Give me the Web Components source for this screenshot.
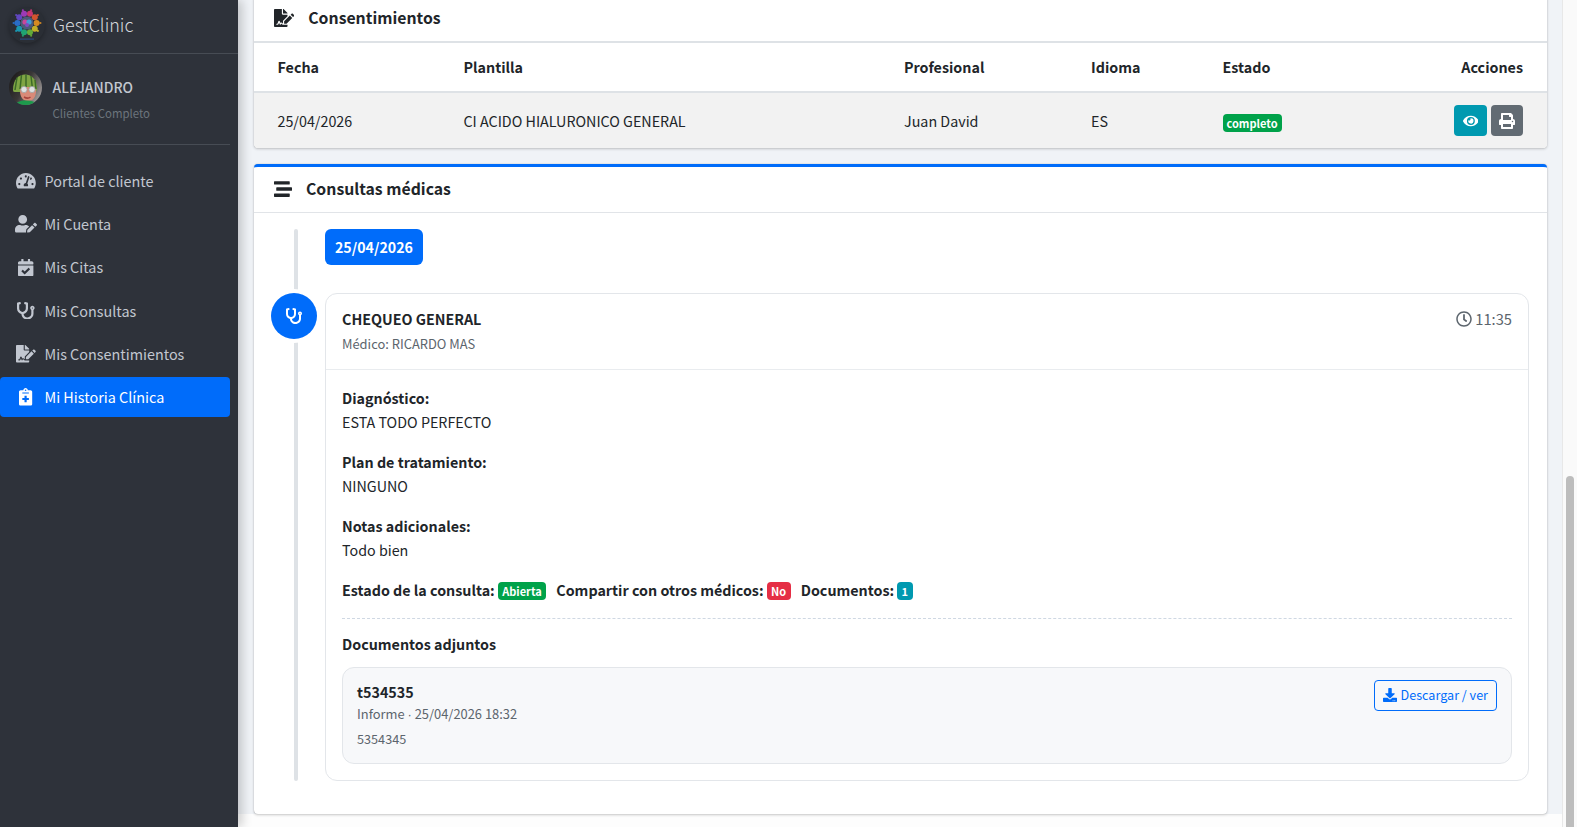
<!DOCTYPE html>
<html lang="es">
<head>
<meta charset="utf-8">
<title>GestClinic</title>
<style>
html,body{margin:0;height:827px;overflow:hidden;}
body{font-family:"Noto Sans CJK SC","Liberation Sans",sans-serif;font-size:14.3px;color:#212529;}
</style>
</head>
<body>
<gc-shell>
	<gc-sidebar slot="side">
		<gc-nav-item icon="gauge" vb="576">Portal de cliente</gc-nav-item>
		<gc-nav-item icon="useredit" vb="640">Mi Cuenta</gc-nav-item>
		<gc-nav-item icon="calendar" vb="448">Mis Citas</gc-nav-item>
		<gc-nav-item icon="stetho" vb="512">Mis Consultas</gc-nav-item>
		<gc-nav-item icon="signature" vb="576">Mis Consentimientos</gc-nav-item>
		<gc-nav-item icon="medical" vb="384" active>Mi Historia Clínica</gc-nav-item>
	</gc-sidebar>

	<gc-card class="consent" icon="signature" vb="576">
		<span slot="title">Consentimientos</span>
		<gc-consent-table></gc-consent-table>
	</gc-card>

	<gc-card class="visits" icon="stream" vb="512" accent>
		<span slot="title">Consultas médicas</span>
		<gc-timeline date="25/04/2026">
			<gc-visit title="CHEQUEO GENERAL" doctor="Médico: RICARDO MAS" time="11:35">
				<gc-field label="Diagnóstico:">ESTA TODO PERFECTO</gc-field>
				<gc-field label="Plan de tratamiento:">NINGUNO</gc-field>
				<gc-field label="Notas adicionales:">Todo bien</gc-field>
				<gc-status></gc-status>
				<gc-doc name="t534535" meta="Informe · 25/04/2026 18:32" note="5354345"></gc-doc>
			</gc-visit>
		</gc-timeline>
	</gc-card>
</gc-shell>

<script>
const ICONS = {
	gauge:'M288 32C128.94 32 0 160.94 0 320c0 52.8 14.25 102.26 39.06 144.8 5.61 9.62 16.3 15.2 27.44 15.2h443c11.14 0 21.83-5.58 27.44-15.2C561.75 422.26 576 372.8 576 320c0-159.06-128.94-288-288-288zm0 64c14.71 0 26.58 10.13 30.32 23.65-1.11 2.26-2.64 4.23-3.45 6.67l-9.22 27.67c-5.13 3.49-10.97 6.01-17.64 6.01-17.67 0-32-14.33-32-32S270.33 96 288 96zM96 384c-17.67 0-32-14.33-32-32s14.33-32 32-32 32 14.33 32 32-14.33 32-32 32zm48-160c-17.67 0-32-14.33-32-32s14.33-32 32-32 32 14.33 32 32-14.33 32-32 32zm246.77-72.41l-61.33 184C343.13 347.33 352 364.54 352 384c0 11.72-3.38 22.55-8.88 32H232.88c-5.5-9.45-8.88-20.28-8.88-32 0-33.94 26.5-61.43 59.9-63.59l61.34-184.01c4.17-12.56 17.73-19.45 30.36-15.17 12.57 4.19 19.35 17.79 15.17 30.36zm14.66 57.2l15.52-46.55c3.47-1.29 7.13-2.23 11.05-2.23 17.67 0 32 14.33 32 32s-14.33 32-32 32c-11.38-.01-20.89-6.28-26.57-15.22zM480 384c-17.67 0-32-14.33-32-32s14.33-32 32-32 32 14.33 32 32-14.33 32-32 32z',
	useredit:'M224 256c70.7 0 128-57.3 128-128S294.7 0 224 0 96 57.3 96 128s57.3 128 128 128zm89.6 32h-16.7c-22.2 10.2-46.9 16-72.9 16s-50.6-5.8-72.9-16h-16.7C60.2 288 0 348.2 0 422.4V464c0 26.5 21.5 48 48 48h274.9c-2.4-6.8-3.4-14-2.6-21.3l6.8-60.9 1.2-11.1 7.9-7.9 77.3-77.3c-24.5-27.7-60-45.5-99.9-45.5zm45.3 145.3l-6.8 61c-1.1 10.2 7.5 18.8 17.6 17.6l60.9-6.8 137.9-137.9-71.7-71.7-137.9 137.8zM633 268.9L595.1 231c-9.3-9.3-24.5-9.3-33.8 0l-37.8 37.8-4.1 4.1 71.8 71.7 41.8-41.8c9.3-9.4 9.3-24.5 0-33.9z',
	calendar:'M436 160H12c-6.627 0-12-5.373-12-12v-36c0-26.51 21.49-48 48-48h48V12c0-6.627 5.373-12 12-12h40c6.627 0 12 5.373 12 12v52h128V12c0-6.627 5.373-12 12-12h40c6.627 0 12 5.373 12 12v52h48c26.51 0 48 21.49 48 48v36c0 6.627-5.373 12-12 12zM12 192h424c6.627 0 12 5.373 12 12v260c0 26.51-21.49 48-48 48H48c-26.51 0-48-21.49-48-48V204c0-6.627 5.373-12 12-12zm333.296 95.947l-28.169-28.398c-4.667-4.705-12.265-4.736-16.97-.068L194.12 364.665l-45.98-46.352c-4.667-4.705-12.266-4.736-16.971-.068l-28.397 28.17c-4.705 4.667-4.736 12.265-.068 16.97l82.601 83.269c4.667 4.705 12.265 4.736 16.97.068l142.953-141.805c4.705-4.667 4.736-12.265.068-16.97z',
	stetho:'M447.1 112c-34.2.5-62.3 28.4-63 62.6-.5 24.3 12.5 45.6 32 56.8V344c0 57.3-50.2 104-112 104-60 0-109.2-44.1-111.9-99.2C265 333.8 320 269.2 320 192V36.6c0-11.4-8.1-21.3-19.3-23.5L237.8.5c-13-2.6-25.6 5.8-28.2 18.8L206.4 35c-2.6 13 5.8 25.6 18.8 28.2l30.7 6.1v121.4c0 52.9-42.2 96.7-95.1 97.2-53.4.5-96.9-42.7-96.9-96V69.4l30.7-6.1c13-2.6 21.4-15.2 18.8-28.2l-3.1-15.7C107.7 6.4 95.1-2 82.1.6L19.3 13C8.1 15.3 0 25.1 0 36.6V192c0 77.3 55.1 142 128.1 156.8C130.7 439.2 208.6 512 304 512c97 0 176-75.4 176-168V231.4c19.1-11.1 32-31.7 32-55.4 0-35.7-29.2-64.5-64.9-64zm.9 80c-8.8 0-16-7.2-16-16s7.2-16 16-16 16 7.2 16 16-7.2 16-16 16z',
	signature:'M218.17 424.14c-2.95-5.92-8.09-6.52-10.17-6.52s-7.22.59-10.02 6.19l-7.67 15.34c-6.37 12.78-25.03 11.37-29.48-2.09L144 386.59l-10.61 31.88c-5.89 17.66-22.38 29.53-41 29.53H80c-8.84 0-16-7.16-16-16s7.16-16 16-16h12.39c4.83 0 9.11-3.08 10.64-7.66l18.19-54.64c3.3-9.81 12.44-16.41 22.78-16.41s19.48 6.59 22.77 16.41l13.88 41.64c19.75-16.19 54.06-9.7 66 14.16 1.89 3.78 5.49 5.95 9.36 6.26v-82.12l128-127.09V160H248c-13.2 0-24-10.8-24-24V0H24C10.7 0 0 10.7 0 24v464c0 13.3 10.7 24 24 24h336c13.3 0 24-10.7 24-24v-40l-128-.11c-16.12-.31-30.58-9.28-37.83-23.75zM384 121.9c0-6.3-2.5-12.4-7-16.9L279.1 7c-4.5-4.5-10.6-7-17-7H256v128h128v-6.1zm-96 225.06V416h68.99l161.68-162.78-67.88-67.88L288 346.96zm280.54-179.63l-31.87-31.87c-9.94-9.94-26.07-9.94-36.01 0l-27.25 27.25 67.88 67.88 27.25-27.25c9.95-9.94 9.95-26.07 0-36.01z',
	medical:'M336 64h-80c0-35.3-28.7-64-64-64s-64 28.7-64 64H48C21.5 64 0 85.5 0 112v352c0 26.5 21.5 48 48 48h288c26.5 0 48-21.5 48-48V112c0-26.5-21.5-48-48-48zM192 40c13.3 0 24 10.7 24 24s-10.7 24-24 24-24-10.7-24-24 10.7-24 24-24zm96 304c0 4.4-3.6 8-8 8h-56v56c0 4.4-3.6 8-8 8h-48c-4.4 0-8-3.6-8-8v-56h-56c-4.4 0-8-3.6-8-8v-48c0-4.4 3.6-8 8-8h56v-56c0-4.4 3.6-8 8-8h48c4.4 0 8 3.6 8 8v56h56c4.4 0 8 3.6 8 8v48zm0-192c0 4.4-3.6 8-8 8H104c-4.4 0-8-3.6-8-8v-16c0-4.4 3.6-8 8-8h176c4.4 0 8 3.6 8 8v16z',
	stream:'M16 128h416c8.84 0 16-7.16 16-16V48c0-8.84-7.16-16-16-16H16C7.16 32 0 39.16 0 48v64c0 8.84 7.16 16 16 16zm480 80H80c-8.84 0-16 7.16-16 16v64c0 8.84 7.16 16 16 16h416c8.84 0 16-7.16 16-16v-64c0-8.84-7.16-16-16-16zm-64 176H16c-8.84 0-16 7.16-16 16v64c0 8.84 7.16 16 16 16h416c8.84 0 16-7.16 16-16v-64c0-8.84-7.16-16-16-16z',
	eye:'M572.52 241.4C518.29 135.59 410.93 64 288 64S57.68 135.64 3.48 241.41a32.35 32.35 0 0 0 0 29.19C57.71 376.41 165.07 448 288 448s230.32-71.64 284.52-177.41a32.35 32.35 0 0 0 0-29.19zM288 400a144 144 0 1 1 144-144 143.93 143.93 0 0 1-144 144zm0-240a95.31 95.31 0 0 0-25.31 3.79 47.85 47.85 0 0 1-66.9 66.9A95.78 95.78 0 1 0 288 160z',
	print:'M448 192V77.25c0-8.49-3.37-16.62-9.37-22.63L393.37 9.37c-6-6-14.14-9.37-22.63-9.37H96C78.33 0 64 14.33 64 32v160c-35.35 0-64 28.65-64 64v112c0 8.84 7.16 16 16 16h48v96c0 17.67 14.33 32 32 32h320c17.67 0 32-14.33 32-32v-96h48c8.84 0 16-7.16 16-16V256c0-35.35-28.65-64-64-64zm-64 256H128v-96h256v96zm0-224H128V64h192v48c0 8.84 7.16 16 16 16h48v96zm48 72c-13.25 0-24-10.75-24-24 0-13.26 10.75-24 24-24s24 10.74 24 24c0 13.25-10.75 24-24 24z',
	download:'M216 0h80c13.3 0 24 10.7 24 24v168h87.7c17.8 0 26.7 21.5 14.1 34.1L269.7 378.3c-7.5 7.5-19.8 7.5-27.3 0L90.1 226.1c-12.6-12.6-3.7-34.1 14.1-34.1H192V24c0-13.3 10.7-24 24-24zm296 376v112c0 13.3-10.7 24-24 24H24c-13.3 0-24-10.7-24-24V376c0-13.3 10.7-24 24-24h146.7l49 49c20.1 20.1 52.5 20.1 72.6 0l49-49H488c13.3 0 24 10.7 24 24zm-124 88c0-11-9-20-20-20s-20 9-20 20 9 20 20 20 20-9 20-20zm64 0c0-11-9-20-20-20s-20 9-20 20 9 20 20 20 20-9 20-20z',
	clock:'M256 8C119 8 8 119 8 256s111 248 248 248 248-111 248-248S393 8 256 8zm0 448c-110.5 0-200-89.5-200-200S145.5 56 256 56s200 89.5 200 200-89.5 200-200 200zm61.8-104.4l-84.9-61.7c-3.1-2.3-4.9-5.9-4.9-9.7V116c0-6.6 5.4-12 12-12h32c6.6 0 12 5.4 12 12v141.7l66.8 48.6c5.4 3.9 6.5 11.4 2.6 16.8L334.6 349c-3.9 5.3-11.4 6.5-16.8 2.6z'
}

function svgIcon(name,vb,h){
	const w = h*vb/512
	return `<svg xmlns="http://www.w3.org/2000/svg" width="${w}" height="${h}" viewBox="0 0 ${vb} 512" fill="currentColor" style="display:block;flex:none"><path d="${ICONS[name]}"/></svg>`
}

// small helper so each element only has to give its shadow html
function shadow(el,html){
	el.attachShadow({mode:'open'})
	el.shadowRoot.innerHTML = html
}

class GcShell extends HTMLElement{
	connectedCallback(){
		shadow(this,`<style>
		:host{display:flex;width:1577px;height:827px;background:#f0f3f7;overflow:hidden;}
		.main{flex:1;min-width:0;display:flex;flex-direction:column;gap:16px;padding:0 15px 0 16px;overflow:hidden;position:relative;}
		.foot{flex:1;background:#fdfdfd;margin:-16px -15px 0 -16px;}
		.bar{flex:none;width:15px;box-sizing:border-box;background:#fafafa;border-left:1px solid #e8e8e8;display:flex;flex-direction:column;justify-content:flex-end;padding-left:3px;}
		.thumb{width:8px;height:351px;background:#bdbdbd;border-radius:4px 4px 0 0;}
		</style>
		<slot name="side"></slot>
		<div class="main"><slot></slot><div class="foot"></div></div>
		<div class="bar"><div class="thumb"></div></div>`)
	}
}

class GcSidebar extends HTMLElement{
	connectedCallback(){
		// logo: gear ring in rainbow segments
		const colors = ['#e0367c','#ee5a2e','#f29a1f','#dcc626','#6cc13a','#1fb87c','#16a8c4','#2a78e0','#6a4bd8','#b03ccc']
		let ring = ''
		for(let i=0;i<10;i++){
			const a = (i+.5)/10*Math.PI*2
			const x = 18+Math.sin(a)*9.6, y = 16-Math.cos(a)*9.6
			const ox = 18+Math.sin(a)*13.4, oy = 16-Math.cos(a)*13.4
			ring += `<circle cx="${x}" cy="${y}" r="3" fill="${colors[i]}" opacity=".85"/><circle cx="${ox}" cy="${oy}" r="1.1" fill="${colors[i]}" opacity=".8"/>`
		}
		shadow(this,`<style>
		:host{display:block;flex:none;width:238px;height:827px;background:#2e323a;color:#c2c7d0;box-shadow:4px 0 10px rgba(0,0,0,.2);position:relative;z-index:2;}
		.brand{height:54px;box-sizing:border-box;border-bottom:1px solid #474c54;display:flex;align-items:center;padding:0 0 6px 9px;gap:8px;font-size:17.9px;font-weight:300;color:#d5d8dd;}
		.logo{width:36px;height:36px;border-radius:50%;background:#2a2e35;box-shadow:0 2px 5px rgba(0,0,0,.3);display:block;flex:none;margin-top:2px;}
		.user{margin-right:8px;height:91px;box-sizing:border-box;border-bottom:1px solid #474c54;display:flex;padding:16px 0 0 9px;gap:10.5px;}
		.avatar{width:33px;height:35px;flex:none;display:block;}
		.name{font-size:13.9px;line-height:24px;font-weight:500;color:#c2c7d0;margin-top:5px;}
		.role{font-size:11.4px;line-height:20px;color:#6c757d;margin-top:4px;}
		nav{display:flex;flex-direction:column;margin:16px 8px 0 0;}
		</style>
		<div class="brand">
			<svg class="logo" viewBox="0 0 36 36">
				${ring}
				<circle cx="18" cy="16" r="6.6" fill="#4b5a78"/>
				<circle cx="16" cy="15" r="2.6" fill="#c9479a"/>
				<circle cx="20" cy="15" r="2.6" fill="#3f9bd8"/>
				<circle cx="18" cy="18" r="2" fill="#7b4cc0"/>
				<rect x="11" y="31.5" width="14" height="1.2" fill="#2c4a7d"/>
			</svg>
			<span>GestClinic</span>
		</div>
		<div class="user">
			<svg class="avatar" viewBox="0 0 33 35">
				<defs>
					<clipPath id="c"><ellipse cx="16.5" cy="17.5" rx="16.5" ry="17.5"/></clipPath>
					<linearGradient id="g" x1="0" y1="0" x2="1" y2=".6"><stop offset="0" stop-color="#151414"/><stop offset=".55" stop-color="#3a3737"/><stop offset="1" stop-color="#9a9594"/></linearGradient>
				</defs>
				<g clip-path="url(#c)">
					<rect width="33" height="35" fill="url(#g)"/>
					<path d="M4 20C4 9 10 4.500 16 4.500S28 9 28 19c0 2-1 3-3 3H7c-2 0-3 0-3-2z" fill="#7fa544"/>
					<path d="M8 7.500L6 20M12.500 5L11 19M17 4.500V18M22 6l1.500 13M26 10l1 9" stroke="#3c6a28" stroke-width="1.5" fill="none"/>
					<path d="M11 21c0-3 2-4 7-4s9 1 9 4c0 6-3 10-8 10s-8-4-8-10z" fill="#d98a78"/>
					<circle cx="15" cy="19.500" r="3.100" fill="#dfe2e2" stroke="#9ea1a1" stroke-width=".8"/>
					<circle cx="23" cy="19.500" r="3.100" fill="#dfe2e2" stroke="#9ea1a1" stroke-width=".8"/>
					<path d="M15 27c2 1.200 5 1.200 6.500 0" stroke="#a8443d" stroke-width="1.500" fill="none"/>
					<path d="M6 35c1-3 5-4.500 11-4.500S28 32 29 35z" fill="#1d9a4c"/>
				</g>
			</svg>
			<div><div class="name">ALEJANDRO</div><div class="role">Clientes Completo</div></div>
		</div>
		<nav><slot></slot></nav>`)
	}
}

class GcNavItem extends HTMLElement{
	connectedCallback(){
		const vb = +this.getAttribute('vb')
		shadow(this,`<style>
		:host{display:block;height:40px;margin-bottom:3.2px;border-radius:4px;line-height:40px;font-size:14.4px;color:#c2c7d0;}
		:host([active]){background:#006cfa;color:#fff;}
		.row{display:flex;align-items:center;height:100%;}
		.ico{width:36px;margin:0 .5px 0 8px;flex:none;display:flex;justify-content:center;}
		</style>
		<div class="row"><span class="ico">${svgIcon(this.getAttribute('icon'),vb,17.6)}</span><span><slot></slot></span></div>`)
	}
}

class GcCard extends HTMLElement{
	connectedCallback(){
		const accent = this.hasAttribute('accent')
		const vb = +this.getAttribute('vb')
		shadow(this,`<style>
		:host{display:block;flex:none;position:relative;background:#fff;border-radius:4px;box-shadow:0 0 1px rgba(0,0,0,.25),0 1px 3px rgba(0,0,0,.2);}
		:host(.consent){margin-top:-6px;}
		:host([accent]){border-top:3px solid #006cfa;}
		header{display:flex;align-items:center;box-sizing:border-box;height:${accent?46:47}px;padding:${accent?'0 0 2px 19.5px':'0 0 0 20px'};border-bottom:${accent?'1px solid #e1e4e8':'0'};font-size:15.8px;font-weight:700;color:#212529;gap:${accent?14.5:14}px;}
		</style>
		<header>${svgIcon(this.getAttribute('icon'),vb,18)}<slot name="title"></slot></header>
		<slot></slot>`)
	}
}

class GcBadge extends HTMLElement{
	connectedCallback(){
		shadow(this,`<style>
		:host{display:inline-block;height:18px;line-height:18px;padding:0 4px;border-radius:4px;font-size:11px;font-weight:700;color:#fff;background:var(--bg,#00a24a);vertical-align:-1px;box-sizing:content-box;}
		</style><slot></slot>`)
	}
}

class GcConsentTable extends HTMLElement{
	connectedCallback(){
		shadow(this,`<style>
		:host{display:block;}
		table{width:100%;border-collapse:collapse;table-layout:fixed;font-size:14.3px;}
		th,td{padding:0 24px;text-align:left;}
		th:nth-child(-n+2),td:nth-child(-n+2){padding-left:23.5px;}
		th{height:46px;padding-bottom:2px;font-weight:700;border-top:2px solid #dee2e6;border-bottom:2px solid #dee2e6;box-sizing:content-box;}
		td{height:55px;background:#f2f2f2;color:#212529;}
		tr:last-child td:first-child{border-bottom-left-radius:4px;}
		tr:last-child td:last-child{border-bottom-right-radius:4px;}
		.r{text-align:right;}
		.acts{display:flex;justify-content:flex-end;gap:4px;}
		button{width:33px;height:31px;border:0;border-radius:4px;color:#fff;display:flex;align-items:center;justify-content:center;padding:0;}
		.info{background:#0099b0;}
		.sec{background:#626b73;width:32px;}
		</style>
		<table>
			<colgroup><col style="width:186px"><col style="width:440px"><col style="width:187px"><col style="width:131.5px"><col style="width:171px"><col></colgroup>
			<thead><tr><th>Fecha</th><th>Plantilla</th><th>Profesional</th><th>Idioma</th><th>Estado</th><th class="r">Acciones</th></tr></thead>
			<tbody><tr>
				<td>25/04/2026</td><td>CI ACIDO HIALURONICO GENERAL</td><td>Juan David</td><td>ES</td>
				<td><gc-badge>completo</gc-badge></td>
				<td><div class="acts">
					<button class="info">${svgIcon('eye',576,14)}</button>
					<button class="sec">${svgIcon('print',512,16)}</button>
				</div></td>
			</tr></tbody>
		</table>`)
	}
}

class GcTimeline extends HTMLElement{
	connectedCallback(){
		shadow(this,`<style>
		:host{display:block;position:relative;padding:16px 18px 33px 71px;}
		.line{position:absolute;left:40px;top:16px;bottom:33px;width:4px;background:#dee2e6;border-radius:2px;}
		.date{display:inline-block;height:36px;line-height:36px;padding:0 10px;border-radius:6px;background:#006cfa;color:#fff;font-weight:700;font-size:14.2px;margin-bottom:28px;vertical-align:top;}
		</style>
		<div class="line"></div>
		<div><span class="date">${this.getAttribute('date')}</span></div>
		<slot></slot>`)
	}
}

class GcVisit extends HTMLElement{
	connectedCallback(){
		shadow(this,`<style>
		:host{display:block;position:relative;background:#fff;border:1px solid #e3e6ea;border-radius:12px;}
		.dot{position:absolute;left:-55px;top:-1px;width:46px;height:46px;border-radius:50%;background:#006cfa;color:#fff;display:flex;align-items:center;justify-content:center;box-shadow:0 0 0 4px #fff;}
		header{display:flex;justify-content:space-between;padding:13px 16px 12px;border-bottom:1px solid #e9ecef;}
		.t{font-weight:700;line-height:24px;}
		.s{font-size:12.9px;line-height:26px;color:#5c656d;}
		.time{display:flex;align-items:center;gap:3px;height:23px;color:#5c656d;font-size:14.7px;}
		.body{padding:16px;}
		</style>
		<div class="dot">${svgIcon('stetho',512,16)}</div>
		<header>
			<div><div class="t">${this.getAttribute('title')}</div><div class="s">${this.getAttribute('doctor')}</div></div>
			<div class="time">${svgIcon('clock',512,16)}<span>${this.getAttribute('time')}</span></div>
		</header>
		<div class="body"><slot></slot></div>`)
	}
}

class GcField extends HTMLElement{
	connectedCallback(){
		shadow(this,`<style>
		:host{display:block;line-height:24px;margin-bottom:16px;}
		b{display:block;font-weight:700;}
		</style><b>${this.getAttribute('label')}</b><slot></slot>`)
	}
}

class GcStatus extends HTMLElement{
	connectedCallback(){
		shadow(this,`<style>
		:host{display:block;line-height:24px;font-weight:700;padding-bottom:16px;border-bottom:1px dashed #cfd8e3;}
		.row{display:flex;align-items:center;height:24px;}
		gc-badge{margin:1px 10px 0 3px;padding:0 4.5px;}
		.n{--bg:#e52e45;}
		.i{--bg:#0099b0;}
		</style>
		<div class="row">
			<span>Estado de la consulta:</span><gc-badge>Abierta</gc-badge>
			<span>Compartir con otros médicos:</span><gc-badge class="n">No</gc-badge>
			<span>Documentos:</span><gc-badge class="i">1</gc-badge>
		</div>`)
	}
}

class GcDoc extends HTMLElement{
	connectedCallback(){
		const meta = this.getAttribute('meta').replace('·','<span class="sep">·</span>')
		shadow(this,`<style>
		:host{display:block;}
		h4{margin:13px 0 11px;font-size:14.3px;line-height:24px;font-weight:700;}
		.box{display:flex;justify-content:space-between;border:1px solid #e3e6ea;border-radius:12px;background:#f7f8fa;padding:12px 14px;height:71px;}
		.n{font-weight:700;line-height:24px;}
		.m{font-size:12.9px;line-height:20px;color:#5c656d;}
		.sep{font-family:"Liberation Sans",sans-serif;}
		.x{font-size:12.7px;line-height:21px;color:#5c656d;margin-top:3px;}
		.btn{display:flex;align-items:center;gap:4px;height:31px;box-sizing:border-box;padding:0 8px 2px;border:1px solid #006cfa;border-radius:4px;color:#006cfa;font-size:12.6px;}
		</style>
		<h4>Documentos adjuntos</h4>
		<div class="box">
			<div>
				<div class="n">${this.getAttribute('name')}</div>
				<div class="m">${meta}</div>
				<div class="x">${this.getAttribute('note')}</div>
			</div>
			<div class="btn">${svgIcon('download',512,14)}<span>Descargar / ver</span></div>
		</div>`)
	}
}

window.customElements.define('gc-shell',GcShell)
window.customElements.define('gc-sidebar',GcSidebar)
window.customElements.define('gc-nav-item',GcNavItem)
window.customElements.define('gc-card',GcCard)
window.customElements.define('gc-badge',GcBadge)
window.customElements.define('gc-consent-table',GcConsentTable)
window.customElements.define('gc-timeline',GcTimeline)
window.customElements.define('gc-visit',GcVisit)
window.customElements.define('gc-field',GcField)
window.customElements.define('gc-status',GcStatus)
window.customElements.define('gc-doc',GcDoc)
</script>
</body>
</html>
